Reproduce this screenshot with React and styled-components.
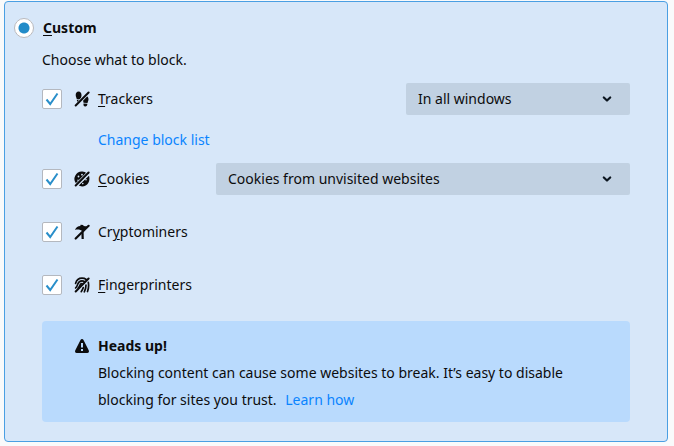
import React from 'react';
import styled, { createGlobalStyle } from 'styled-components'

export default function App() {
    return (
        <>
            <GlobalStyle />
            <Panel>
                <Header>
                    <Radio type="radio" name="category" id="custom" defaultChecked />
                    <label htmlFor="custom"><u>C</u>ustom</label>
                </Header>
                <Content>
                    <Description>Choose what to block.</Description>
                    <Row>
                        <Checkbox type="checkbox" id="trackers" defaultChecked />
                        <TrackersIcon />
                        <Label htmlFor="trackers"><u>T</u>rackers</Label>
                        <Menu $width={224}>
                            <select aria-label="Trackers" defaultValue="all">
                                <option value="all">In all windows</option>
                                <option value="private">Only in Private Windows</option>
                            </select>
                            <Chevron />
                        </Menu>
                    </Row>
                    <BlockList><Link href="#blocklist">Change block list</Link></BlockList>
                    <Row>
                        <Checkbox type="checkbox" id="cookies" defaultChecked />
                        <CookiesIcon />
                        <Label htmlFor="cookies"><u>C</u>ookies</Label>
                        <Menu $width={414}>
                            <select aria-label="Cookies" defaultValue="unvisited">
                                <option value="unvisited">Cookies from unvisited websites</option>
                                <option value="all">All cookies</option>
                            </select>
                            <Chevron />
                        </Menu>
                    </Row>
                    <Row $spaced>
                        <Checkbox type="checkbox" id="cryptominers" defaultChecked />
                        <CryptominersIcon />
                        <Label htmlFor="cryptominers">Cr<u>y</u>ptominers</Label>
                    </Row>
                    <Row $spaced>
                        <Checkbox type="checkbox" id="fingerprinters" defaultChecked />
                        <FingerprintersIcon />
                        <Label htmlFor="fingerprinters"><u>F</u>ingerprinters</Label>
                    </Row>
                    <Notice>
                        <NoticeTitle>
                            <WarningIcon />
                            Heads up!
                        </NoticeTitle>
                        <p>
                            Blocking content can cause some websites to break. It’s easy to disable
                            blocking for sites you trust. <Link href="#learn" $after>Learn how</Link>
                        </p>
                    </Notice>
                </Content>
            </Panel>
        </>
    )
}

function TrackersIcon() {
    return (
        <Icon viewBox="0 0 16 16" aria-hidden="true">
            <path d="M4.500 .6C6.600 .6 7.600 2.300 7.500 4.500C7.400 6.300 6.700 7.200 6.400 8.400L2.800 8.200C2.600 6.800 1.700 5.600 1.700 3.900C1.700 1.900 2.900 .6 4.500 .6Z" />
            <path d="M2.900 8.900L5.600 9.100L3.500 11.500C3 10.800 2.900 9.900 2.900 8.900Z" />
            <path d="M11.800 5C13.700 5.100 14.600 6.700 14.500 8.500C14.400 9.900 13.700 10.800 13.500 12.100L9.500 11.700C9.500 10.200 8.700 9.700 9 8Z" />
            <path d="M9.500 12.500L13.400 12.800C13.300 14.700 12.500 15.600 11.200 15.500C9.800 15.400 9.300 14.300 9.500 12.500Z" />
            <path d="M15 1.200L2 14.500" stroke="#d7e7f9" strokeWidth="3.400" />
            <path d="M14.600 1.500L1.700 14.500" stroke="currentColor" strokeWidth="2" strokeLinecap="round" />
        </Icon>
    )
}

function CookiesIcon() {
    return (
        <Icon viewBox="0 0 16 16" aria-hidden="true">
            <path d="M8.500 .6A7.400 7.400 0 0 0 2 12.500L12.700 2.300A7.400 7.400 0 0 0 8.500 .6Z" />
            <path d="M15 4.800L4.700 14.600A7.400 7.400 0 0 0 15.400 8.500C15.500 7.200 15.400 6 15 4.800Z" />
            <path d="M15 1.200L2 14.500" stroke="#d7e7f9" strokeWidth="3.400" />
            <path d="M14.600 1.500L1.700 14.500" stroke="currentColor" strokeWidth="2" strokeLinecap="round" />
            <g fill="#d7e7f9">
                <circle cx="4.500" cy="5.500" r="0.900" />
                <circle cx="8" cy="3.700" r="0.900" />
                <circle cx="4" cy="9.200" r="0.700" />
                <circle cx="12" cy="8.800" r="0.800" />
                <circle cx="8.800" cy="12.600" r="0.800" />
            </g>
        </Icon>
    )
}

function CryptominersIcon() {
    return (
        <Icon viewBox="0 0 16 16" aria-hidden="true">
            <path d="M1 6C1.900 3.400 4 2.200 6.300 2.100L6.600 .8L9.300 1L9.500 2.100L13.500 2.400L8.800 7.200L6.300 5.900C4.500 5.500 2.800 5.400 1 6Z" />
            <path d="M7.400 9.700L9.600 7.600L9.800 15L7.600 15Z" />
            <path d="M14.600 1.800L1.700 14.500" stroke="currentColor" strokeWidth="2.200" strokeLinecap="round" />
        </Icon>
    )
}

function FingerprintersIcon() {
    return (
        <Icon viewBox="0 0 16 16" aria-hidden="true">
            <g fill="none" stroke="currentColor" strokeWidth="1.700" strokeLinecap="round">
                <path d="M1.600 6.400C2.500 3.100 5 1.200 8 1.200C9.700 1.200 11 1.600 12.200 2.500" />
                <path d="M1.600 11C3.200 9.300 3.200 8.500 3.700 7.200C4.500 5 6 3.900 8 3.900C9 3.900 9.700 4.100 10.300 4.500" />
                <path d="M4.200 11C5.700 9.300 5.900 8.200 6.500 7.300C6.900 6.700 7.400 6.500 8 6.500" />
                <path d="M14.300 5.300C14.900 8.300 14.600 11.500 13.500 14.500" />
                <path d="M12 8C12 10.500 11.400 12.800 10.300 14.800" />
                <path d="M9.300 10.600C8.800 12.200 8.200 13.400 7.200 14.700" />
                <path d="M14.600 1.500L1.700 14.500" strokeWidth="2" />
            </g>
        </Icon>
    )
}

function WarningIcon() {
    return (
        <Icon viewBox="0 0 16 16" aria-hidden="true">
            <path fillRule="evenodd" d="M8 1C8.700 1 9.200 1.300 9.500 1.900L14.800 12.500C15.300 13.700 14.700 15 13.300 15H2.700C1.300 15 .7 13.700 1.200 12.500L6.500 1.900C6.800 1.300 7.300 1 8 1ZM7 5V9.500H9V5ZM7 11V13H9V11Z" />
        </Icon>
    )
}

function Chevron() {
    return (
        <svg viewBox="0 0 10 10" width="10" height="10" aria-hidden="true">
            <path d="M1.800 3.500L5 6.500L8.200 3.500" fill="none" stroke="#0c1620" strokeWidth="2.200" strokeLinecap="round" strokeLinejoin="round" />
        </svg>
    )
}

const GlobalStyle = createGlobalStyle`
* {
    box-sizing: border-box;
}
body {
    margin: 0;
    background-color: #f9fafb;
    color: #0c0c0d;
    font-family: 'Noto Sans', 'Open Sans', sans-serif;
    font-size: 14px;
    line-height: 20px;
}
p {
    margin: 0;
}
u {
    text-underline-offset: 2px;
}
`

const Panel = styled.section`
margin: 1px 6px 4px 4px;
padding: 16px 37px 19px 9px;
background-color: #d7e7f9;
border: 1px solid #4a9fe3;
border-radius: 4px;
`

const Header = styled.div`
display: flex;
align-items: center;
gap: 9px;
font-weight: bold;
`

const Content = styled.div`
padding-left: 28px;
`

const Radio = styled.input`
appearance: none;
width: 20px;
height: 20px;
margin: 0;
border: 1px solid #b9b9bd;
border-radius: 50%;
background-color: white;

&:checked {
    background-image: radial-gradient(circle, #228bc8 5px, white 6px);
}
`

const Description = styled.p`
margin: 12px 0 13px;
`

const Row = styled.div`
display: flex;
align-items: center;
min-height: 32px;
margin-top: ${props => props.$spaced ? '21px' : '0'};
`

const Checkbox = styled.input`
appearance: none;
width: 20px;
height: 20px;
margin: 0 12px 0 0;
border: 1px solid #b4b8bf;
border-radius: 2px;
background-color: white;

&:checked {
    background-image: url("data:image/svg+xml,%3Csvg xmlns='http://www.w3.org/2000/svg' viewBox='0 0 18 18'%3E%3Cpath d='M3.500 9.500L7.200 14L14.500 3.500' fill='none' stroke='%232a8fca' stroke-width='2'/%3E%3C/svg%3E");
}
`

const Icon = styled.svg`
flex: none;
width: 16px;
height: 16px;
margin-right: 8px;
fill: currentColor;
`

const Label = styled.label`
margin-right: auto;
`

const Menu = styled.div`
display: grid;
align-items: center;
flex: 0 1 ${props => props.$width}px;

select, svg {
    grid-area: 1 / 1;
}
select {
    appearance: none;
    width: 100%;
    height: 32px;
    padding: 0 32px 0 12px;
    border: 0;
    border-radius: 2px;
    background-color: #c1d1e2;
    color: inherit;
    font: inherit;
}
svg {
    justify-self: end;
    margin-right: 18px;
    pointer-events: none;
}
`

const BlockList = styled.div`
padding: 15px 0 13px 56px;
`

const Link = styled.a`
margin-left: ${props => props.$after ? '5px' : '0'};
color: #0a84ff;
text-decoration: none;
`

const Notice = styled.div`
margin-top: 20px;
padding: 11px 32px 9px;
border-radius: 4px;
background-color: #b9dafd;
line-height: 27px;

p {
    padding-left: 24px;
}
`

const NoticeTitle = styled.div`
display: flex;
align-items: center;
font-weight: bold;
`
